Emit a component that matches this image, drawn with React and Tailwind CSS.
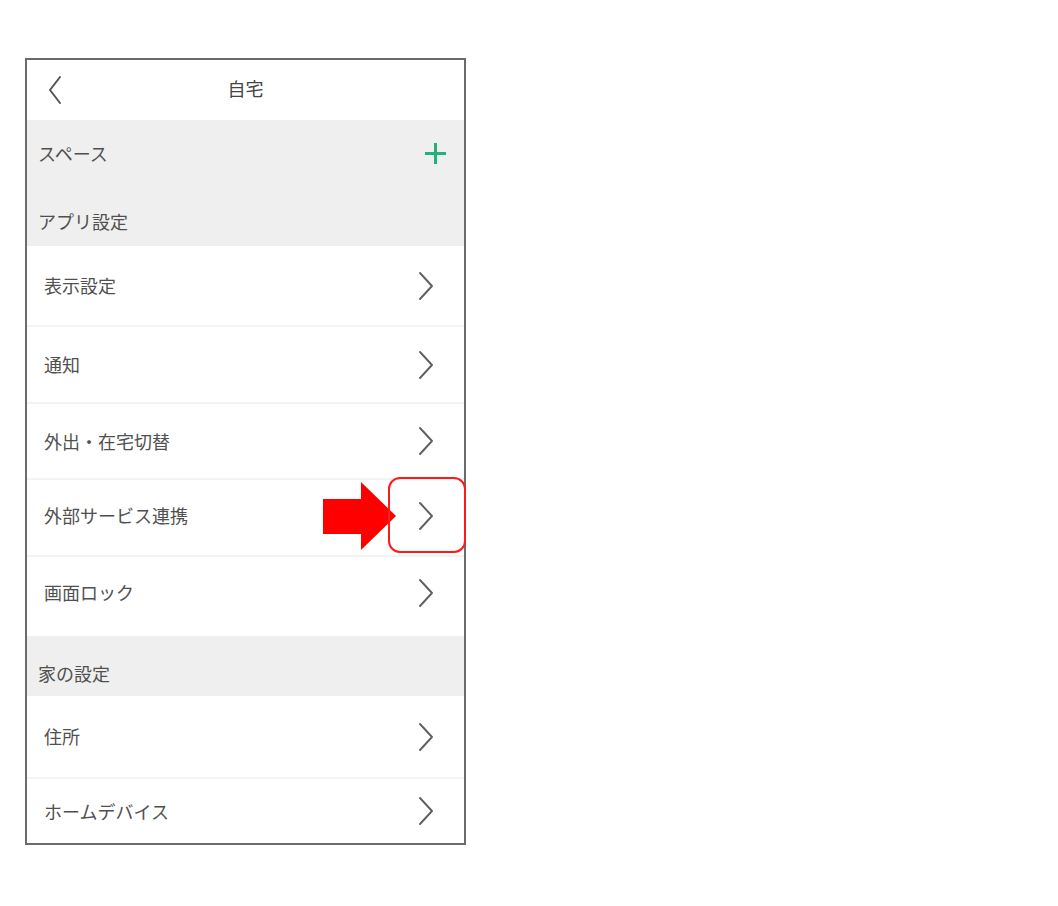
import React from 'react'

const appItems = [
  { label: '表示設定', h: 'h-[79px]' },
  { label: '通知', h: 'h-[77px]' },
  { label: '外出・在宅切替', h: 'h-[76px]' },
  { label: '外部サービス連携', h: 'h-[77px]', pad: 'pb-[4px]' },
  { label: '画面ロック', h: 'h-[81px]', pad: 'pb-[8px]' },
]

const homeItems = [
  { label: '住所', h: 'h-[81px]' },
  { label: 'ホームデバイス', h: 'h-[66px]' },
]

function Chevron() {
  return (
    <svg className="w-[16px] h-[30px]" viewBox="0 0 16 30" fill="none" stroke="#5f5f5f" strokeWidth={1.9} strokeLinecap="round" strokeLinejoin="round">
      <path d="M2 2 L14 15 L2 28" />
    </svg>
  )
}

function Row({ label, h, pad, first }) {
  return (
    <div className={`${h} ${pad || ''} flex items-center justify-between pl-[17px] pr-[30px] bg-white ${first ? '' : 'border-t-2 border-[#f3f3f3]'}`}>
      <span className="text-[18px] text-[#505050]">{label}</span>
      <Chevron />
    </div>
  )
}

export default function App() {
  return (
    <div className="min-h-screen bg-white pl-[25px] pt-[58px]" style={{ fontFamily: '"Noto Sans CJK JP", "Noto Sans", sans-serif' }}>
      <div className="relative w-[441px] h-[787px] border-2 border-[#6b6b6b]">
        <div className="h-full overflow-hidden">
          {/* Header */}
          <div className="relative h-[60px] pb-[4px] flex items-center justify-center bg-white">
            <svg className="absolute left-[21px] top-[15px] w-[14px] h-[30px]" viewBox="0 0 14 30" fill="none" stroke="#555" strokeWidth={2} strokeLinecap="round" strokeLinejoin="round">
              <path d="M12 2 L2 15 L12 28" />
            </svg>
            <span className="text-[18px] text-[#444]">自宅</span>
          </div>

          {/* Space */}
          <div className="bg-[#efefef]">
            <div className="h-[66px] flex items-center justify-between pl-[11px] pr-[18px]">
              <span className="text-[18px] text-[#505050]">スペース</span>
              <svg className="w-[21px] h-[21px]" viewBox="0 0 21 21" fill="none" stroke="#1fb37b" strokeWidth={3}>
                <path d="M10.5 0 V21 M0 10.5 H21" />
              </svg>
            </div>
            <div className="h-[60px] pt-[10px] flex items-center pl-[11px]">
              <span className="text-[18px] text-[#505050]">アプリ設定</span>
            </div>
          </div>

          {appItems.map((it, i) => (
            <Row key={it.label} {...it} first={i === 0} />
          ))}

          <div className="h-[60px] pt-[14px] bg-[#efefef] flex items-center pl-[11px]">
            <span className="text-[18px] text-[#505050]">家の設定</span>
          </div>

          {homeItems.map((it, i) => (
            <Row key={it.label} {...it} first={i === 0} />
          ))}
        </div>

        {/* Annotation */}
        <div className="absolute left-[296px] top-[422px] flex items-center">
          <div className="w-[38px] h-[35px] bg-[#ff0000]" />
          <div className="w-0 h-0 border-y-[34px] border-y-transparent border-l-[35px] border-l-[#ff0000]" />
        </div>
        <div className="absolute left-[361px] top-[417px] w-[78px] h-[76px] rounded-[12px] border-2 border-[#ff1a1a]" />
      </div>
    </div>
  )
}
